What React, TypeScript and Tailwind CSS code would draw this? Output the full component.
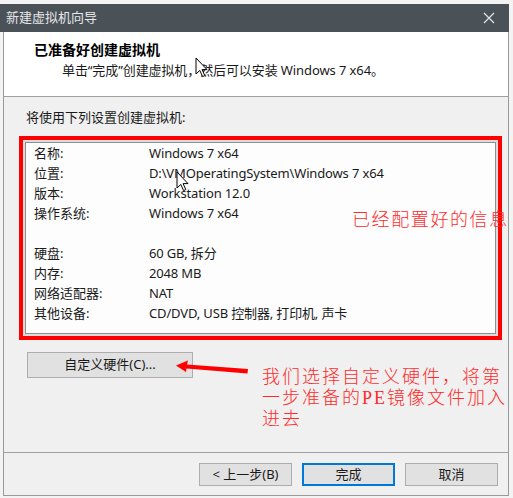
import React from "react";

const ui = { fontFamily: '"Noto Sans", "Noto Sans CJK SC", sans-serif' };
const note = { fontFamily: '"Liberation Serif", "Noto Sans CJK SC", serif' };

const rows: [string, string][] = [
  ["名称:", "Windows 7 x64"],
  ["位置:", "D:\\VMOperatingSystem\\Windows 7 x64"],
  ["版本:", "Workstation 12.0"],
  ["操作系统:", "Windows 7 x64"],
  ["", ""],
  ["硬盘:", "60 GB, 拆分"],
  ["内存:", "2048 MB"],
  ["网络适配器:", "NAT"],
  ["其他设备:", "CD/DVD, USB 控制器, 打印机, 声卡"],
];

const Cursor: React.FC<{ className: string }> = ({ className }) => (
  <svg className={className} width="13" height="21" viewBox="0 0 13 21">
    <path
      d="M1 1 L1 17 L4.8 13.4 L7.6 19.6 L9.8 18.6 L7.1 12.6 L12 12.6 Z"
      fill="#fff"
      stroke="#000"
      strokeWidth="1"
      strokeLinejoin="round"
    />
  </svg>
);

export default function App() {
  return (
    <div className="relative w-[513px] h-[498px] overflow-hidden bg-[#f3f3f3] text-[13px] text-[#1a1a1a]" style={ui}>
      <div className="h-[4px]" />
      <div className="w-[509px]">
        {/* title bar */}
        <div className="h-[28px] bg-[#4a5157] flex items-center justify-between pl-[6px] pr-[14px]">
          <span className="text-[13px] text-[#e4e6e8]">新建虚拟机向导</span>
          <svg width="12" height="12" viewBox="0 0 12 12">
            <path d="M1 1 L11 11 M11 1 L1 11" stroke="#e0e2e4" strokeWidth="1.3" />
          </svg>
        </div>

        <div className="ml-[3px] w-[506px] border border-t-0 border-[#9a9a9a] bg-[#f0f0f0]">
          {/* header */}
          <div className="h-[65px] bg-white border-b border-[#a0a0a0] pl-[30px] pt-[9px]">
            <div className="text-[14px] font-bold leading-[18px] text-black">已准备好创建虚拟机</div>
            <div className="ml-[28px] mt-[2px] leading-[18px] tracking-[-0.1px]">
              单击“完成”创建虚拟机，然后可以安装 Windows 7 x64。
            </div>
          </div>

          {/* content */}
          <div className="h-[355px] pt-[11px]">
            <div className="pl-[22px] leading-[18px]">将使用下列设置创建虚拟机:</div>
            <div className="mt-[10px] ml-[15px] w-[483px] h-[204px] border-[4px] border-[#ff0000]">
              <div className="h-full border-2 border-[#dcdcdc]">
                <div className="h-full border border-[#8e8e8e] bg-[#fdfdfd] pt-[1px] pl-[8px]">
                  {rows.map(([k, v], i) => (
                    <div key={i} className="flex h-[20px] items-center">
                      <span className="w-[115px] shrink-0">{k}</span>
                      <span className="whitespace-nowrap tracking-[-0.15px]">{v}</span>
                    </div>
                  ))}
                </div>
              </div>
            </div>
            <button className="mt-[12px] ml-[23px] w-[166px] h-[26px] bg-[#e1e1e1] border border-[#adadad] text-[13px]">
              自定义硬件(C)...
            </button>
          </div>

          {/* footer */}
          <div className="h-[43px] border-t border-[#a0a0a0] flex justify-end gap-[10px] pt-[10px] pr-[10px]">
            <button className="w-[93px] h-[23px] bg-[#e1e1e1] border border-[#adadad] text-[13px]">&lt; 上一步(B)</button>
            <button className="w-[93px] h-[23px] bg-[#e1e1e1] border-2 border-[#0078d7] text-[13px]">完成</button>
            <button className="w-[93px] h-[23px] bg-[#e1e1e1] border border-[#adadad] text-[13px]">取消</button>
          </div>
        </div>
      </div>

      {/* annotations */}
      <div
        className="absolute left-[352px] top-[208px] text-[18px] leading-[24px] tracking-[1.6px] text-[#ff2a2a] font-light whitespace-nowrap"
        style={note}
      >
        已经配置好的信息
      </div>
      <div
        className="absolute left-[262px] top-[367px] text-[18px] leading-[21px] tracking-[2px] text-[#ff2a2a] font-light whitespace-nowrap"
        style={note}
      >
        我们选择自定义硬件，将第
        <br />
        一步准备的PE镜像文件加入
        <br />
        进去
      </div>
      <svg className="absolute left-[172px] top-[358px]" width="82" height="20" viewBox="0 0 82 20">
        <path d="M4 7.5 L16 2.5 L15 6.5 L76 11 L75.5 15.5 L14.5 10.5 L14 14 Z" fill="#ff0000" />
      </svg>

      <Cursor className="absolute left-[195px] top-[57px]" />
      <Cursor className="absolute left-[176px] top-[171px]" />
    </div>
  );
}
